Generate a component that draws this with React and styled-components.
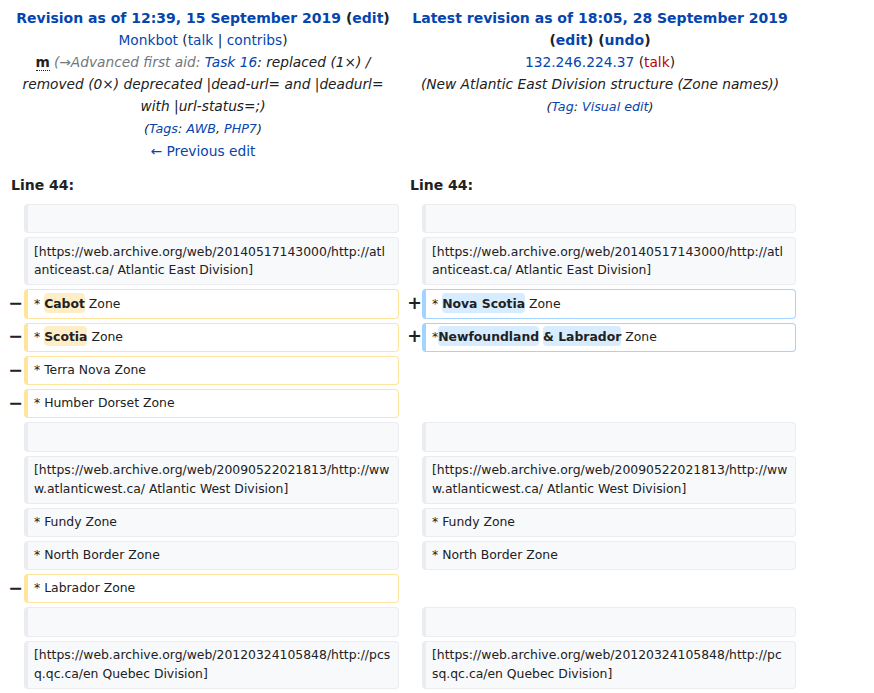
import React from 'react';
import styled, { createGlobalStyle } from 'styled-components';

const GlobalStyle = createGlobalStyle`
  html, body { margin: 0; padding: 0; background: #fff; }
  body {
    font-family: "DejaVu Sans", sans-serif;
    color: #202122;
    font-size: 14px;
  }
`;

const COLS = '17px 375px 5px 18px 374px';

const Page = styled.div`
  padding: 7px 0 0 7px;
  width: 797px;
`;

const HeaderGrid = styled.div`
  display: grid;
  grid-template-columns: ${COLS};
`;

const HeaderCell = styled.div`
  grid-column: ${p => (p.$side === 'right' ? '4 / 6' : '1 / 3')};
  text-align: center;
  line-height: 22px;
  padding: 0 4px;
  font-size: 13.75px;
`;

const Line = styled.div``;

const Title = styled.div`
  font-weight: bold;
  font-size: 14px;
`;

const Link = styled.a`
  color: ${p => (p.$red ? '#ba0000' : '#0645ad')};
  text-decoration: none;
  cursor: pointer;
`;

const Minor = styled.abbr`
  font-weight: bold;
  text-decoration: none;
  border-bottom: 1px dotted #202122;
  margin-right: 4px;
`;

const Comment = styled.span`
  font-style: italic;
`;

const Auto = styled.span`
  color: #72777d;
`;

const Tags = styled.span`
  font-style: italic;
  font-size: 12.7px;
`;

const DiffGrid = styled.div`
  display: grid;
  grid-template-columns: ${COLS};
  row-gap: 4px;
  margin-top: 12px;
`;

const LineNo = styled.div`
  grid-column: ${p => (p.$side === 'right' ? '4 / 6' : '1 / 3')};
  font-weight: bold;
  line-height: 22px;
  padding: 0 0 4px ${p => (p.$side === 'right' ? 6 : 4)}px;
`;

const Marker = styled.div`
  grid-column: ${p => (p.$side === 'right' ? 4 : 1)};
  display: flex;
  align-items: center;
  justify-content: ${p => (p.$side === 'right' ? 'flex-end' : 'center')};
  font-weight: bold;
  font-size: 17.5px;
  line-height: 1;
`;

const BORDER = { context: '#eaecf0', del: '#ffe49c', add: '#a3d3ff' };

const Content = styled.div`
  grid-column: ${p => (p.$side === 'right' ? 5 : 2)};
  background: ${p => (p.$kind === 'context' ? '#f8f9fa' : '#fff')};
  border: 1px solid ${p => BORDER[p.$kind]};
  border-left-width: 4px;
  border-radius: 4px;
  padding: 4.25px ${p => (p.$side === 'right' ? 7.5 : 6)}px 4.25px 6px;
  font-size: 12.4px;
  line-height: 18.75px;
  min-height: 18.75px;
  overflow-wrap: break-word;
  word-wrap: break-word;
`;

const Change = styled.span`
  background: ${p => (p.$kind === 'add' ? '#d8ecff' : '#feeec8')};
  font-weight: bold;
  border-radius: 4px;
  padding: 0.22em 0;
`;

const EAST = '[https://web.archive.org/web/20140517143000/http://atlanticeast.ca/ Atlantic East Division]';
const WEST = '[https://web.archive.org/web/20090522021813/http://www.atlanticwest.ca/ Atlantic West Division]';
const QUEBEC = '[https://web.archive.org/web/20120324105848/http://pcsq.qc.ca/en Quebec Division]';

const rows = [
  { l: { k: 'context', t: [''] }, r: { k: 'context', t: [''] } },
  { l: { k: 'context', t: [EAST] }, r: { k: 'context', t: [EAST] } },
  {
    l: { k: 'del', t: ['* ', { c: 'Cabot' }, ' Zone'] },
    r: { k: 'add', t: ['* ', { c: 'Nova Scotia' }, ' Zone'] },
  },
  {
    l: { k: 'del', t: ['* ', { c: 'Scotia' }, ' Zone'] },
    r: { k: 'add', t: ['*', { c: 'Newfoundland' }, ' ', { c: '& Labrador' }, ' Zone'] },
  },
  { l: { k: 'del', t: ['* Terra Nova Zone'] } },
  { l: { k: 'del', t: ['* Humber Dorset Zone'] } },
  { l: { k: 'context', t: [''] }, r: { k: 'context', t: [''] } },
  { l: { k: 'context', t: [WEST] }, r: { k: 'context', t: [WEST] } },
  { l: { k: 'context', t: ['* Fundy Zone'] }, r: { k: 'context', t: ['* Fundy Zone'] } },
  { l: { k: 'context', t: ['* North Border Zone'] }, r: { k: 'context', t: ['* North Border Zone'] } },
  { l: { k: 'del', t: ['* Labrador Zone'] } },
  { l: { k: 'context', t: [''] }, r: { k: 'context', t: [''] } },
  { l: { k: 'context', t: [QUEBEC] }, r: { k: 'context', t: [QUEBEC] } },
];

function Side({ side, cell }) {
  if (!cell) return null;
  const mark = cell.k === 'del' ? '\u2212' : cell.k === 'add' ? '+' : '';
  return (
    <>
      <Marker $side={side}>{mark}</Marker>
      <Content $side={side} $kind={cell.k}>
        {cell.t.map((part, i) =>
          typeof part === 'string' ? (
            <React.Fragment key={i}>{part}</React.Fragment>
          ) : (
            <Change key={i} $kind={cell.k}>{part.c}</Change>
          )
        )}
      </Content>
    </>
  );
}

export default function App() {
  return (
    <>
      <GlobalStyle />
      <Page>
        <HeaderGrid>
          <HeaderCell $side="left">
            <Title>
              <Link>Revision as of 12:39, 15 September 2019</Link> (<Link>edit</Link>)
            </Title>
            <Line>
              <Link>Monkbot</Link> (<Link>talk</Link> | <Link>contribs</Link>)
            </Line>
            <Line>
              <Minor title="This is a minor edit">m</Minor>
              <Comment>
                <Auto>(→Advanced first aid: </Auto>
                <Link>Task 16</Link>: replaced (1×) / removed (0×) deprecated |dead-url= and |deadurl= with |url-status=;)
              </Comment>
            </Line>
            <Line>
              <Tags>
                (<Link>Tags</Link>: <Link>AWB</Link>, <Link>PHP7</Link>)
              </Tags>
            </Line>
            <Line>
              <Link>← Previous edit</Link>
            </Line>
          </HeaderCell>
          <HeaderCell $side="right">
            <Title>
              <Link>Latest revision as of 18:05, 28 September 2019</Link> (<Link>edit</Link>) (<Link>undo</Link>)
            </Title>
            <Line>
              <Link>132.246.224.37</Link> (<Link $red>talk</Link>)
            </Line>
            <Line>
              <Comment>(New Atlantic East Division structure (Zone names))</Comment>
            </Line>
            <Line>
              <Tags>
                (<Link>Tag</Link>: <Link>Visual edit</Link>)
              </Tags>
            </Line>
          </HeaderCell>
        </HeaderGrid>
        <DiffGrid>
          <LineNo $side="left">Line 44:</LineNo>
          <LineNo $side="right">Line 44:</LineNo>
          {rows.map((row, i) => (
            <React.Fragment key={i}>
              <Side side="left" cell={row.l} />
              <Side side="right" cell={row.r} />
            </React.Fragment>
          ))}
        </DiffGrid>
      </Page>
    </>
  );
}
